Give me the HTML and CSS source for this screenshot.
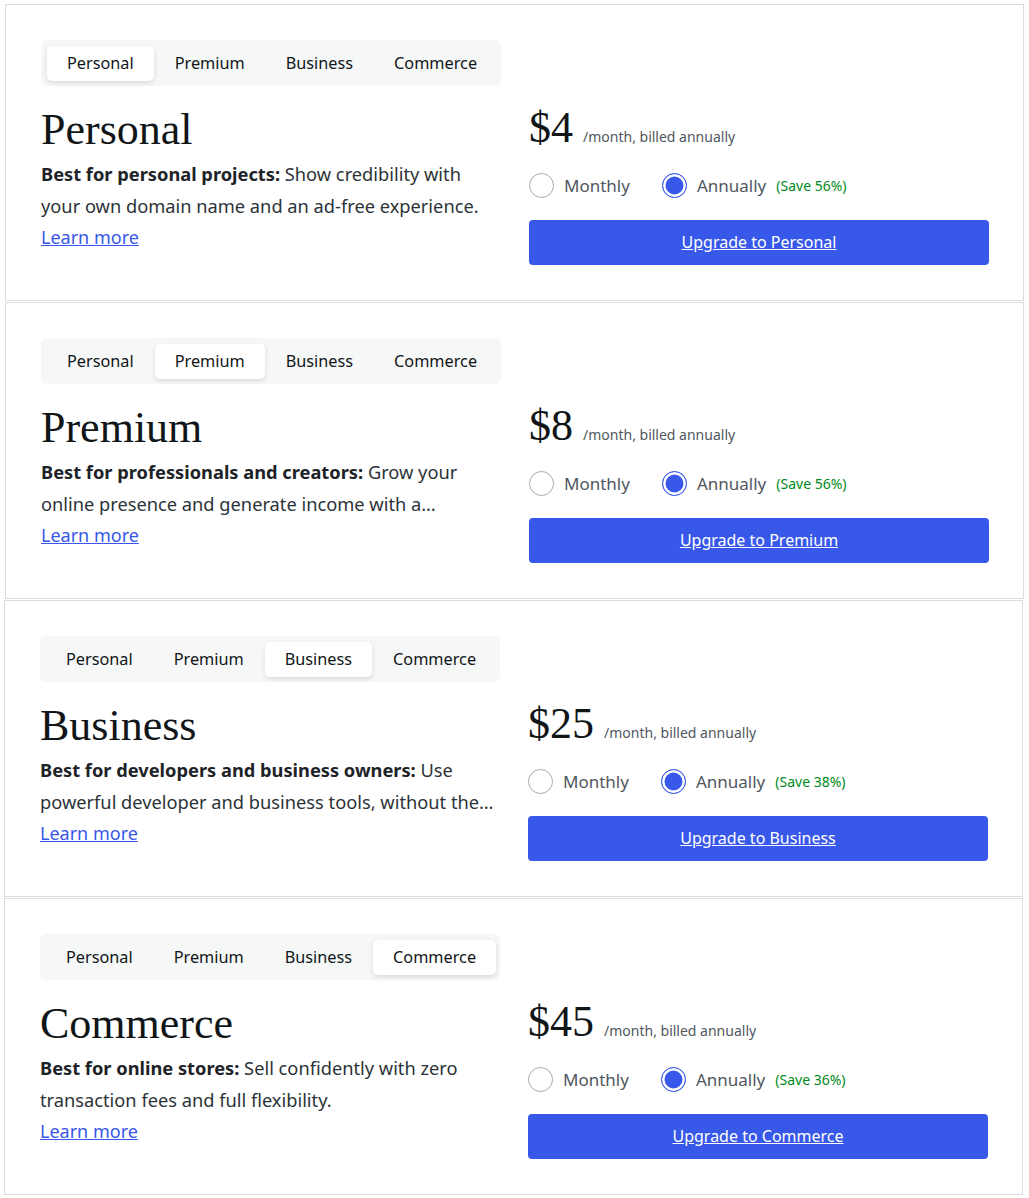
FILE: index.html
```html
<!DOCTYPE html>
<html lang="en">
<head>
    <meta charset="UTF-8">
    <meta name="viewport" content="width=device-width, initial-scale=1.0">
    <title>Plan upgrade cards</title>
    <link rel="stylesheet" href="styles.css">
</head>
<body>

    <!-- Personal -->
    <div class="plan-card">
        <div class="plan-info">
            <div class="plan-tabs">
                <span class="plan-tab active">Personal</span>
                <span class="plan-tab">Premium</span>
                <span class="plan-tab">Business</span>
                <span class="plan-tab">Commerce</span>
            </div>
            <h2 class="plan-title">Personal</h2>
            <p class="plan-desc"><strong>Best for personal projects:</strong> Show credibility with your own domain name and an ad-free experience.</p>
            <a class="learn-more" href="#">Learn more</a>
        </div>
        <div class="plan-pricing">
            <div class="price-line">
                <span class="price">$4</span>
                <span class="price-term">/month, billed annually</span>
            </div>
            <div class="billing">
                <label class="billing-option"><span class="radio"></span>Monthly</label>
                <label class="billing-option"><span class="radio checked"></span>Annually</label>
                <span class="saving">(Save 56%)</span>
            </div>
            <a class="upgrade-button" href="#">Upgrade to Personal</a>
        </div>
    </div>

    <!-- Premium -->
    <div class="plan-card">
        <div class="plan-info">
            <div class="plan-tabs">
                <span class="plan-tab">Personal</span>
                <span class="plan-tab active">Premium</span>
                <span class="plan-tab">Business</span>
                <span class="plan-tab">Commerce</span>
            </div>
            <h2 class="plan-title">Premium</h2>
            <p class="plan-desc"><strong>Best for professionals and creators:</strong> Grow your online presence and generate income with a…</p>
            <a class="learn-more" href="#">Learn more</a>
        </div>
        <div class="plan-pricing">
            <div class="price-line">
                <span class="price">$8</span>
                <span class="price-term">/month, billed annually</span>
            </div>
            <div class="billing">
                <label class="billing-option"><span class="radio"></span>Monthly</label>
                <label class="billing-option"><span class="radio checked"></span>Annually</label>
                <span class="saving">(Save 56%)</span>
            </div>
            <a class="upgrade-button" href="#">Upgrade to Premium</a>
        </div>
    </div>

    <!-- Business -->
    <div class="plan-card shifted">
        <div class="plan-info">
            <div class="plan-tabs">
                <span class="plan-tab">Personal</span>
                <span class="plan-tab">Premium</span>
                <span class="plan-tab active">Business</span>
                <span class="plan-tab">Commerce</span>
            </div>
            <h2 class="plan-title">Business</h2>
            <p class="plan-desc"><strong>Best for developers and business owners:</strong> Use powerful developer and business tools, without the…</p>
            <a class="learn-more" href="#">Learn more</a>
        </div>
        <div class="plan-pricing">
            <div class="price-line">
                <span class="price">$25</span>
                <span class="price-term">/month, billed annually</span>
            </div>
            <div class="billing">
                <label class="billing-option"><span class="radio"></span>Monthly</label>
                <label class="billing-option"><span class="radio checked"></span>Annually</label>
                <span class="saving">(Save 38%)</span>
            </div>
            <a class="upgrade-button" href="#">Upgrade to Business</a>
        </div>
    </div>

    <!-- Commerce -->
    <div class="plan-card shifted">
        <div class="plan-info">
            <div class="plan-tabs">
                <span class="plan-tab">Personal</span>
                <span class="plan-tab">Premium</span>
                <span class="plan-tab">Business</span>
                <span class="plan-tab active">Commerce</span>
            </div>
            <h2 class="plan-title">Commerce</h2>
            <p class="plan-desc"><strong>Best for online stores:</strong> Sell confidently with zero transaction fees and full flexibility.</p>
            <a class="learn-more" href="#">Learn more</a>
        </div>
        <div class="plan-pricing">
            <div class="price-line">
                <span class="price">$45</span>
                <span class="price-term">/month, billed annually</span>
            </div>
            <div class="billing">
                <label class="billing-option"><span class="radio"></span>Monthly</label>
                <label class="billing-option"><span class="radio checked"></span>Annually</label>
                <span class="saving">(Save 36%)</span>
            </div>
            <a class="upgrade-button" href="#">Upgrade to Commerce</a>
        </div>
    </div>

</body>
</html>
```

FILE: styles.css
```css
body {
    margin: 0;
    padding: 4px 5px;
    background: #fff;
    font-family: "Noto Sans", "Open Sans", sans-serif;
    color: #2c3338;
}
.plan-card {
    display: grid;
    grid-template-columns: minmax(0, 1fr) minmax(0, 1fr);
    column-gap: 28px;
    border: 1px solid #dcdcde;
    padding: 35px 34px 35px 35px;
    margin-bottom: 1px;
}
.plan-card.shifted {
    margin-left: -1px;
    margin-right: 1px;
}
.plan-tabs {
    display: flex;
    gap: 1px;
    background: #f6f7f7;
    border-radius: 6px;
    padding: 6px 6px 5px;
    margin-bottom: 20px;
}
.plan-tab {
    padding: 0 20px;
    height: 35px;
    line-height: 35px;
    font-size: 16.25px;
    color: #101517;
    border-radius: 5px;
}
.plan-tab.active {
    background: #fff;
    box-shadow: 0 2px 5px rgba(0,0,0,0.12);
}
.plan-title {
    font-family: "Liberation Serif", serif;
    font-weight: normal;
    font-size: 44px;
    line-height: 48px;
    color: #101517;
    margin: 0 0 4px;
}
.plan-desc {
    font-size: 18.25px;
    line-height: 32px;
    margin: 0;
    display: -webkit-box;
    -webkit-line-clamp: 2;
    -webkit-box-orient: vertical;
    overflow: hidden;
}
.plan-desc strong {
    color: #1d2327;
}
.learn-more {
    font-size: 18px;
    line-height: 30px;
    color: #3858e9;
}
.plan-pricing {
    padding-top: 64px;
}
.price-line {
    display: flex;
    align-items: baseline;
    gap: 10px;
}
.price {
    font-family: "Liberation Serif", serif;
    font-size: 44px;
    line-height: 48px;
    color: #101517;
}
.price-term {
    font-size: 14px;
    color: #50575e;
}
.billing {
    display: flex;
    align-items: center;
    margin-top: 15px;
    height: 36px;
}
.billing-option {
    display: flex;
    align-items: center;
    font-size: 17px;
    color: #50575e;
    margin-right: 32px;
}
.billing-option:last-of-type {
    margin-right: 10px;
}
.radio {
    box-sizing: border-box;
    width: 25px;
    height: 25px;
    border: 1.5px solid #a7aaad;
    border-radius: 50%;
    margin-right: 10px;
}
.radio.checked {
    border: 1.5px solid #3858e9;
    background: #3858e9;
    box-shadow: inset 0 0 0 2.5px #fff;
}
.saving {
    font-size: 14px;
    color: #008a20;
}
.upgrade-button {
    display: block;
    margin-top: 17px;
    height: 45px;
    line-height: 45px;
    background: #3858e9;
    border-radius: 4px;
    color: #fff;
    font-size: 16px;
    text-align: center;
}
```
